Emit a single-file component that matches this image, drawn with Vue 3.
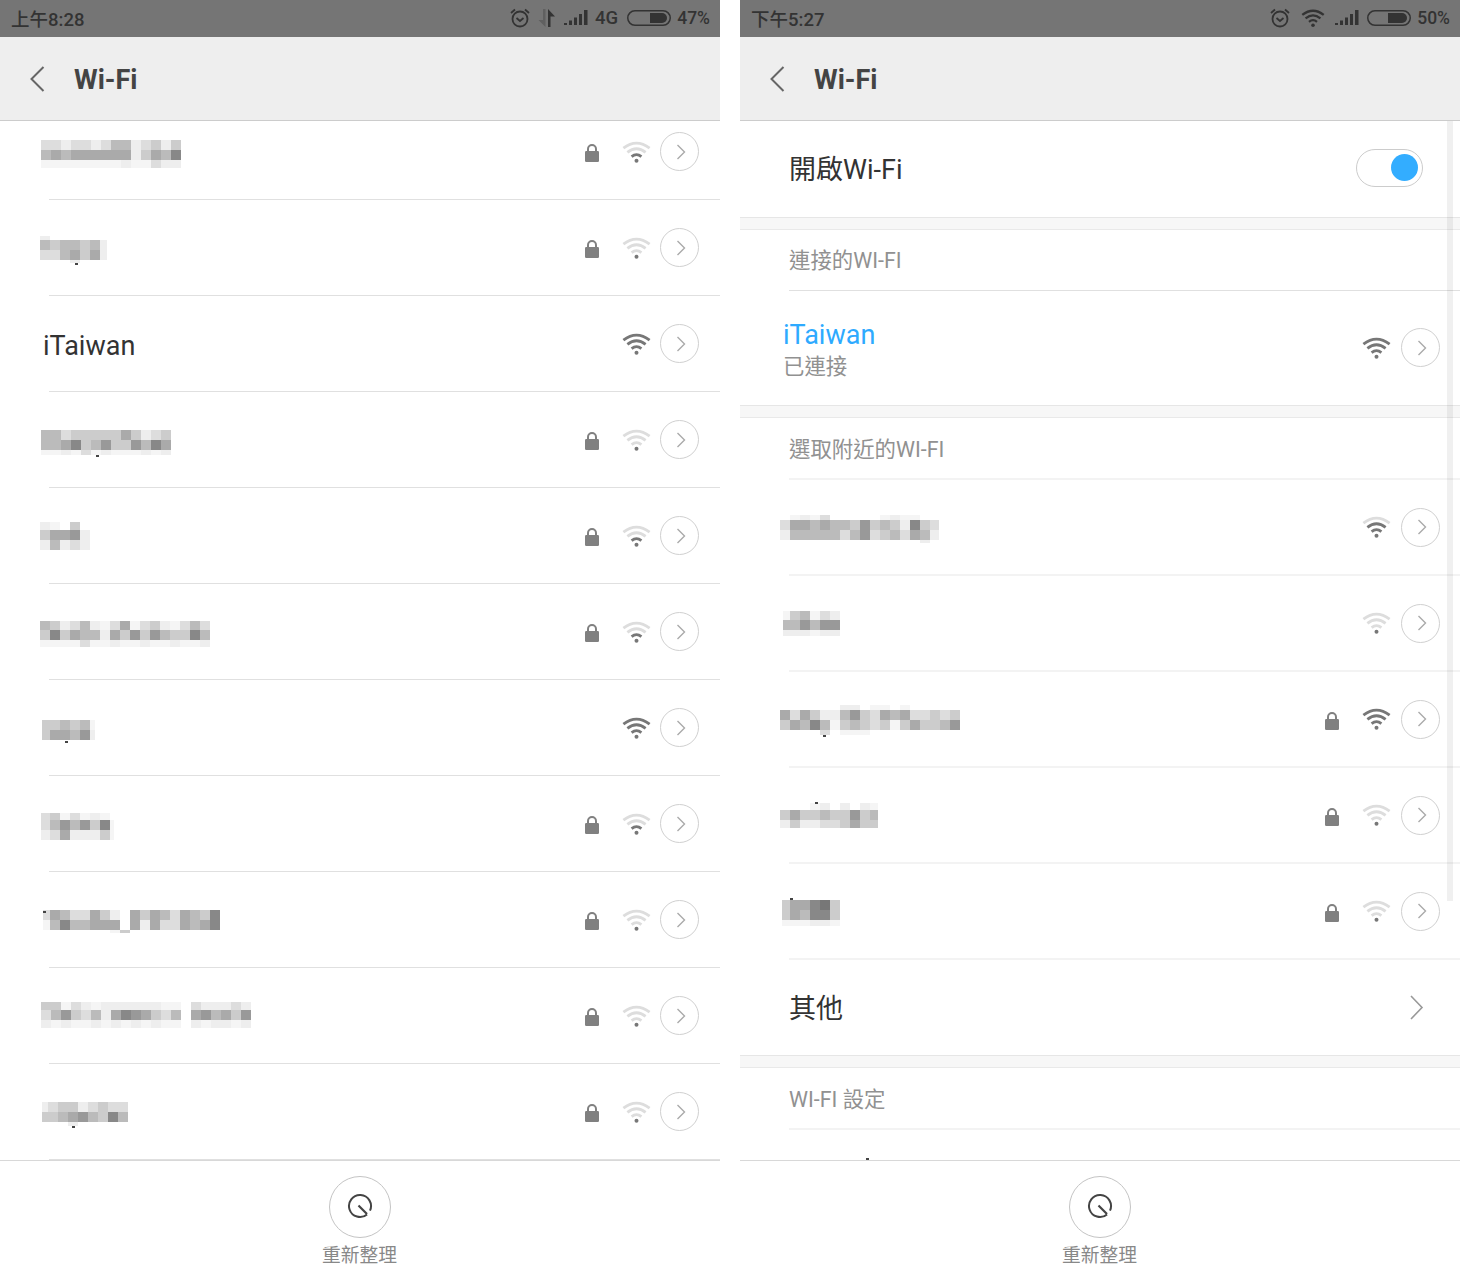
<script setup>
// arcs of the wifi glyph, inner first
const wifiArcs = [
  'M9.6 15.6 Q14.5 11.6 19.4 15.6',
  'M5.4 11.4 Q14.5 4.2 23.6 11.4',
  'M1.4 7.2 Q14.5 -3 27.6 7.2'
]

// masked network names: each char is one 10px block, hex = grey level
const leftRows = [
  { lock: true, level: 1, mask: { x: 41, top: 36, h: [10, 10, 8], rows: ['ddeddedbbedcec', 'babaaaaaaecab8', 'ffffffffeffdee'] } },
  { lock: true, level: 0, mask: { x: 40, top: 36, last: 7, h: [4, 10, 10, 3], rows: ['e......', 'bcbbcbe', 'ddbacae', '...e...'], dot: [35, 27] } },
  { level: 3, name: 'iTaiwan' },
  { lock: true, level: 0, mask: { x: 41, top: 38, h: [10, 10, 5], rows: ['bbdcccccacedc', 'bba8cb9cc9b8a', 'ffefdfefffefe'], dot: [55, 25] } },
  { lock: true, level: 1, mask: { x: 40, top: 34, h: [8, 10, 10], rows: ['ef.c.', 'caa9e', 'ebede'] } },
  { lock: true, level: 1, mask: { x: 40, top: 37, h: [9, 10, 7], rows: ['bcedbefdafdcefdbd', 'c8cabbeac9c9bcc8b', 'ffffdffeffeffeffe'] } },
  { level: 3, mask: { x: 42, top: 40, first: 8, last: 5, h: [10, 10], rows: ['ccbcbf', 'caab9e'], dot: [23, 21] } },
  { lock: true, level: 1, mask: { x: 41, top: 37, first: 9, last: 4, h: [7, 10, 10], rows: ['dcfdfef.', 'db9b9c8f', 'edaeeecf'] } },
  { lock: true, level: 0, mask: { x: 43, top: 38, first: 7, h: [10, 10, 3], rows: ['dabddace.acabdabc8', 'fb8bbaaa.aeaddaba8', '.......fc.........'], dot: [0, 1] } },
  { lock: true, level: 0, mask: { x: 41, top: 34, h: [8, 10, 8], rows: ['ccfdefeeeeeeff.deeede', 'db9cdbea89acdb.a9bac9', 'efeffefefefeff.efeefe'] } },
  { lock: true, level: 0, mask: { x: 42, top: 38, first: 6, h: [10, 10, 4], rows: ['edccedcdd', 'ccba9bc8b', '...e.....'], dot: [30, 24] } }
]

const rightRows = [
  { level: 2, mask: { x: 780, top: 35, first: 10, last: 9, h: [5, 10, 10, 3], rows: ['.fefd.....feff..', 'daababbc9cbce8cd', 'ebbbbbdb9dcbdabe', '..............e.'] } },
  { level: 0, mask: { x: 783, top: 35, first: 7, h: [9, 10, 6], rows: ['fcbfde', 'bb9b99', 'eeefee'] } },
  { lock: true, level: 3, mask: { x: 780, top: 33, h: [5, 10, 10, 5], rows: ['......ee.ff.f.....', 'adaceeb9cdabaddcdc', 'cab8bfcbcdcfcaccb9', '....d.fff.........'], dot: [43, 30] } },
  { lock: true, level: 0, mask: { x: 780, top: 35, first: 10, last: 8, h: [7, 10, 8], rows: ['...fe.e.ef', 'caccbcc9cb', 'eceeddcacc'], dot: [35, -1] } },
  { lock: true, level: 0, mask: { x: 782, top: 36, first: 8, h: [10, 10, 6], rows: ['caa87c', 'cab88c', 'fffeef'], dot: [8, -2] } }
]

const cellColor = (ch) => {
  if (ch === '.') return 'transparent'
  if (ch === 'f') return '#f5f5f5'
  return '#' + ch + ch + ch
}

const maskStyle = (m) => {
  const n = m.rows[0].length
  const cols = Array(n).fill('10px')
  if (m.first) cols[0] = m.first + 'px'
  if (m.last) cols[n - 1] = m.last + 'px'
  return {
    marginLeft: m.x + 'px',
    marginTop: m.top + 'px',
    gridTemplateColumns: cols.join(' '),
    gridTemplateRows: m.h.map((v) => v + 'px').join(' ')
  }
}

const maskStyleRight = (m) => ({ ...maskStyle(m), marginLeft: m.x - 740 + 'px' })

const dotStyle = (m) => ({ left: m.dot[0] + 'px', top: m.dot[1] + 'px' })
</script>

<template>
  <div class="page">
    <!-- left phone: scrolled list -->
    <section class="phone">
      <div class="status">
        <span class="clock">上午8:28</span>
        <div class="status-right">
          <svg class="alarm" width="20" height="20" viewBox="0 0 20 20">
            <circle cx="10" cy="11" r="7.5" />
            <path d="M1 5 L5 1.5 M19 5 L15 1.5 M6.5 10 L10 13 L13.5 10" />
          </svg>
          <svg class="arrows" width="18" height="18" viewBox="0 0 18 18">
            <path class="dim" d="M7.5 0 V18 L0.5 11 H5 V0 Z" />
            <path class="solid" d="M10 18 V0 L17 7.5 H12.5 V18 Z" />
          </svg>
          <svg class="signal" width="24" height="15" viewBox="0 0 24 15">
            <path d="M0 13 H3 V15 H0 Z M5 10.5 H8 V15 H5 Z M10 7.5 H13 V15 H10 Z M15 4 H18 V15 H15 Z M20 0 H23.5 V15 H20 Z" />
          </svg>
          <span class="net">4G</span>
          <svg class="battery" width="44" height="16" viewBox="0 0 44 16">
            <rect x="0.75" y="0.75" width="42.5" height="14.5" rx="7.2" />
            <path d="M23 3 H35 A5 5 0 0 1 35 13 H23 Z" />
          </svg>
          <span class="pct">47%</span>
        </div>
      </div>
      <header class="bar">
        <svg class="back" width="15" height="26" viewBox="0 0 15 26"><path d="M13.5 1 L1.5 13 L13.5 25" /></svg>
        <h1>Wi-Fi</h1>
      </header>
      <div class="list">
        <div class="list-inner">
          <template v-for="(row, i) in leftRows" :key="i">
            <div class="row">
              <span v-if="row.name" class="plain-name">{{ row.name }}</span>
              <div v-else class="mask" :style="maskStyle(row.mask)">
                <template v-for="(line, r) in row.mask.rows" :key="r">
                  <i v-for="(ch, c) in line" :key="c" :style="{ background: cellColor(ch) }"></i>
                </template>
                <b v-if="row.mask.dot" class="speck" :style="dotStyle(row.mask)"></b>
              </div>
              <div class="trail">
                <svg v-if="row.lock" class="lock" width="14" height="19" viewBox="0 0 14 19">
                  <path d="M3 9 V6 a4 4 0 0 1 8 0 V9" />
                  <rect x="0" y="8" width="14" height="11" rx="1.2" />
                </svg>
                <svg class="wifi" width="29" height="22" viewBox="0 0 29 22">
                  <path v-for="(d, a) in wifiArcs" :key="a" :d="d" :class="a < row.level ? 'on' : 'off'" />
                  <circle cx="14.5" cy="19.8" r="2" />
                </svg>
                <span class="more">
                  <svg width="10" height="16" viewBox="0 0 10 16"><path d="M1.5 1 L8.5 8 L1.5 15" /></svg>
                </span>
              </div>
            </div>
            <div class="rule"></div>
          </template>
        </div>
      </div>
      <footer class="foot">
        <span class="refresh">
          <svg width="26" height="26" viewBox="0 0 26 26">
            <path d="M20.07 21.43 A11 11 0 1 1 22.97 17.65" />
            <path class="needle" d="M11.5 12.5 L20 21" />
          </svg>
        </span>
        <span class="refresh-label">重新整理</span>
      </footer>
    </section>

    <!-- right phone: settings view -->
    <section class="phone">
      <div class="status">
        <span class="clock">下午5:27</span>
        <div class="status-right second">
          <svg class="alarm" width="20" height="20" viewBox="0 0 20 20">
            <circle cx="10" cy="11" r="7.5" />
            <path d="M1 5 L5 1.5 M19 5 L15 1.5 M6.5 10 L10 13 L13.5 10" />
          </svg>
          <svg class="wifi-status" width="24" height="18" viewBox="0 0 29 22">
            <path v-for="(d, a) in wifiArcs" :key="a" :d="d" />
            <circle cx="14.5" cy="19.8" r="2.2" />
          </svg>
          <svg class="signal" width="24" height="15" viewBox="0 0 24 15">
            <path d="M0 13 H3 V15 H0 Z M5 10.5 H8 V15 H5 Z M10 7.5 H13 V15 H10 Z M15 4 H18 V15 H15 Z M20 0 H23.5 V15 H20 Z" />
          </svg>
          <svg class="battery" width="44" height="16" viewBox="0 0 44 16">
            <rect x="0.75" y="0.75" width="42.5" height="14.5" rx="7.2" />
            <path d="M21 3 H35 A5 5 0 0 1 35 13 H21 Z" />
          </svg>
          <span class="pct">50%</span>
        </div>
      </div>
      <header class="bar">
        <svg class="back" width="15" height="26" viewBox="0 0 15 26"><path d="M13.5 1 L1.5 13 L13.5 25" /></svg>
        <h1>Wi-Fi</h1>
      </header>
      <div class="list">
        <div class="switch-row">
          <span class="big up">開啟Wi-Fi</span>
          <span class="toggle"><span class="knob"></span></span>
        </div>
        <div class="band"></div>
        <div class="title">連接的WI-FI</div>
        <div class="title-rule"></div>
        <div class="connected">
          <div class="conn-text">
            <span class="conn-name">iTaiwan</span>
            <span class="conn-state">已連接</span>
          </div>
          <div class="trail">
            <svg class="wifi" width="29" height="22" viewBox="0 0 29 22">
              <path v-for="(d, a) in wifiArcs" :key="a" :d="d" class="on" />
              <circle cx="14.5" cy="19.8" r="2" />
            </svg>
            <span class="more">
              <svg width="10" height="16" viewBox="0 0 10 16"><path d="M1.5 1 L8.5 8 L1.5 15" /></svg>
            </span>
          </div>
        </div>
        <div class="band"></div>
        <div class="title low">選取附近的WI-FI</div>
        <div class="soft-rule"></div>
        <template v-for="(row, i) in rightRows" :key="i">
          <div class="row short">
            <div class="mask" :style="maskStyleRight(row.mask)">
              <template v-for="(line, r) in row.mask.rows" :key="r">
                <i v-for="(ch, c) in line" :key="c" :style="{ background: cellColor(ch) }"></i>
              </template>
              <b v-if="row.mask.dot" class="speck" :style="dotStyle(row.mask)"></b>
            </div>
            <div class="trail">
              <svg v-if="row.lock" class="lock" width="14" height="19" viewBox="0 0 14 19">
                <path d="M3 9 V6 a4 4 0 0 1 8 0 V9" />
                <rect x="0" y="8" width="14" height="11" rx="1.2" />
              </svg>
              <svg class="wifi" width="29" height="22" viewBox="0 0 29 22">
                <path v-for="(d, a) in wifiArcs" :key="a" :d="d" :class="a < row.level ? 'on' : 'off'" />
                <circle cx="14.5" cy="19.8" r="2" />
              </svg>
              <span class="more">
                <svg width="10" height="16" viewBox="0 0 10 16"><path d="M1.5 1 L8.5 8 L1.5 15" /></svg>
              </span>
            </div>
          </div>
          <div class="soft-rule"></div>
        </template>
        <div class="other-row">
          <span class="big nudge">其他</span>
          <svg class="other-arrow" width="15" height="25" viewBox="0 0 15 25"><path d="M2 1 L13 12.5 L2 24" /></svg>
        </div>
        <div class="band"></div>
        <div class="title low">WI-FI 設定</div>
        <div class="soft-rule"></div>
        <div class="scrollbar"></div>
        <b class="speck list-speck"></b>
      </div>
      <footer class="foot">
        <span class="refresh">
          <svg width="26" height="26" viewBox="0 0 26 26">
            <path d="M20.07 21.43 A11 11 0 1 1 22.97 17.65" />
            <path class="needle" d="M11.5 12.5 L20 21" />
          </svg>
        </span>
        <span class="refresh-label">重新整理</span>
      </footer>
    </section>
  </div>
</template>

<style scoped>
.page {
  display: flex;
  gap: 20px;
  width: 1460px;
  height: 1280px;
  font-family: Roboto, "Noto Sans CJK TC", sans-serif;
  background: #fff;
  overflow: hidden;
}

.phone {
  width: 720px;
  height: 1280px;
  display: flex;
  flex-direction: column;
}

/* status bar */
.status {
  height: 37px;
  background: #757575;
  display: flex;
  align-items: center;
  justify-content: space-between;
  padding: 0 10px 2px 11px;
  color: #333;
  font-weight: 500;
  box-sizing: border-box;
  flex-shrink: 0;
}
.clock,
.net {
  font-size: 18.5px;
}
.pct {
  font-size: 17.5px;
}
.status-right {
  display: flex;
  align-items: center;
}
.alarm {
  fill: none;
  stroke: #333;
  stroke-width: 1.8;
  margin-right: 8px;
}
.arrows {
  margin-right: 8px;
}
.arrows .dim { fill: #606060; }
.arrows .solid { fill: #333; }
.signal {
  fill: #333;
  margin-right: 7px;
}
.net {
  margin-right: 9px;
}
.battery {
  margin-right: 6px;
}
.battery rect {
  fill: none;
  stroke: #333;
  stroke-width: 1.5;
}
.battery path {
  fill: #333;
}
.second .alarm { margin-right: 11px; }
.second .signal { margin-right: 8px; }
.wifi-status {
  fill: #333;
  margin-right: 10px;
}
.wifi-status path {
  fill: none;
  stroke: #333;
  stroke-width: 2.8;
}

/* header */
.bar {
  height: 84px;
  background: #eee;
  border-bottom: 1px solid #ccc;
  display: flex;
  align-items: center;
  padding-left: 30px;
  box-sizing: border-box;
  flex-shrink: 0;
}
.back {
  fill: none;
  stroke: #666;
  stroke-width: 2;
  margin-right: 29px;
}
.bar h1 {
  margin: 3px 0 0;
  font-size: 27px;
  font-weight: 700;
  color: #444;
}

.list {
  position: relative;
  flex: 1;
  overflow: hidden;
  min-height: 0;
}
.list-inner {
  margin-top: -17px;
}

.row {
  height: 95px;
  display: flex;
  align-items: center;
}
.row.short {
  height: 94px;
}
.rule {
  height: 1px;
  margin-left: 49px;
  background: #e0e0e0;
}
.plain-name {
  margin: 4px 0 0 43px;
  font-size: 27px;
  color: #333;
}

/* pixelated names */
.mask {
  position: relative;
  display: grid;
  align-self: flex-start;
}
.speck {
  position: absolute;
  width: 3px;
  height: 2px;
  background: #444;
}
.list-speck {
  left: 126px;
  bottom: 0;
}

.trail {
  display: flex;
  align-items: center;
  margin-left: auto;
  padding-right: 20px;
}
.lock {
  margin: 2px 23px 0 0;
}
.lock path {
  fill: none;
  stroke: #808080;
  stroke-width: 2;
}
.lock rect {
  fill: #808080;
}
.wifi {
  margin-right: 10px;
  fill: #777;
}
.wifi path {
  fill: none;
  stroke-width: 2.8;
}
.wifi .on { stroke: #777; }
.wifi .off { stroke: #ddd; }
.more {
  width: 39px;
  height: 39px;
  border: 1px solid #d0d0d0;
  border-radius: 50%;
  display: flex;
  align-items: center;
  justify-content: center;
  box-sizing: border-box;
}
.more svg {
  fill: none;
  stroke: #aaa;
  stroke-width: 1.4;
  margin-left: 2px;
}
/* left list is a pixel tighter than the right one */
.list-inner .trail {
  padding-right: 21px;
}
.list-inner .wifi {
  margin-right: 9px;
}

/* right list */
.switch-row {
  height: 96px;
  display: flex;
  align-items: center;
  justify-content: space-between;
  padding: 0 37px 0 49px;
}
.big {
  font-size: 27px;
  color: #333;
}
.big.up {
  margin-top: -4px;
}
.big.nudge {
  margin-top: -2px;
}
.toggle {
  width: 67px;
  height: 38px;
  border: 1px solid #ccc;
  border-radius: 19px;
  display: flex;
  align-items: center;
  justify-content: flex-end;
  padding-right: 4px;
  box-sizing: border-box;
  margin-top: -3px;
}
.knob {
  width: 27px;
  height: 27px;
  border-radius: 50%;
  background: #33adff;
}
.band {
  height: 13px;
  background: #f7f7f7;
  border-top: 1px solid #e6e6e6;
  border-bottom: 1px solid #e9e9e9;
  box-sizing: border-box;
}
.title {
  height: 60px;
  line-height: 62px;
  padding-left: 49px;
  font-size: 21.4px;
  color: #919191;
}
.title.low {
  line-height: 64px;
}
.title-rule {
  height: 1px;
  margin-left: 49px;
  background: #e0e0e0;
}
.soft-rule {
  height: 2px;
  margin-left: 49px;
  background: #f3f3f3;
}
.connected {
  height: 114px;
  display: flex;
  align-items: center;
}
.connected .trail {
  margin-bottom: 1px;
}
.conn-text {
  display: flex;
  flex-direction: column;
  margin-left: 43px;
  padding-top: 4px;
}
.conn-name {
  font-size: 27px;
  line-height: 34px;
  color: #2eaaff;
}
.conn-state {
  font-size: 21.4px;
  line-height: 30px;
  color: #919191;
}
.other-row {
  height: 95px;
  display: flex;
  align-items: center;
  justify-content: space-between;
  padding: 0 36px 0 49px;
}
.other-arrow {
  fill: none;
  stroke: #999;
  stroke-width: 1.6;
}
.scrollbar {
  position: absolute;
  top: 0;
  right: 7px;
  width: 6px;
  height: 780px;
  background: rgba(0, 0, 0, 0.06);
}

/* refresh footer */
.foot {
  height: 120px;
  border-top: 1px solid #d8d8d8;
  display: flex;
  flex-direction: column;
  align-items: center;
  padding-top: 15px;
  box-sizing: border-box;
  flex-shrink: 0;
}
.refresh {
  width: 62px;
  height: 62px;
  border: 1px solid #c4c4c4;
  border-radius: 50%;
  display: flex;
  align-items: center;
  justify-content: center;
  box-sizing: border-box;
}
.refresh svg {
  fill: none;
  stroke: #444;
  stroke-width: 2;
  margin-bottom: 2px;
}
.refresh .needle {
  stroke-width: 2.2;
}
.refresh-label {
  margin: 5px 1px 0 0;
  font-size: 18.75px;
  line-height: 26px;
  color: #888;
}
</style>
